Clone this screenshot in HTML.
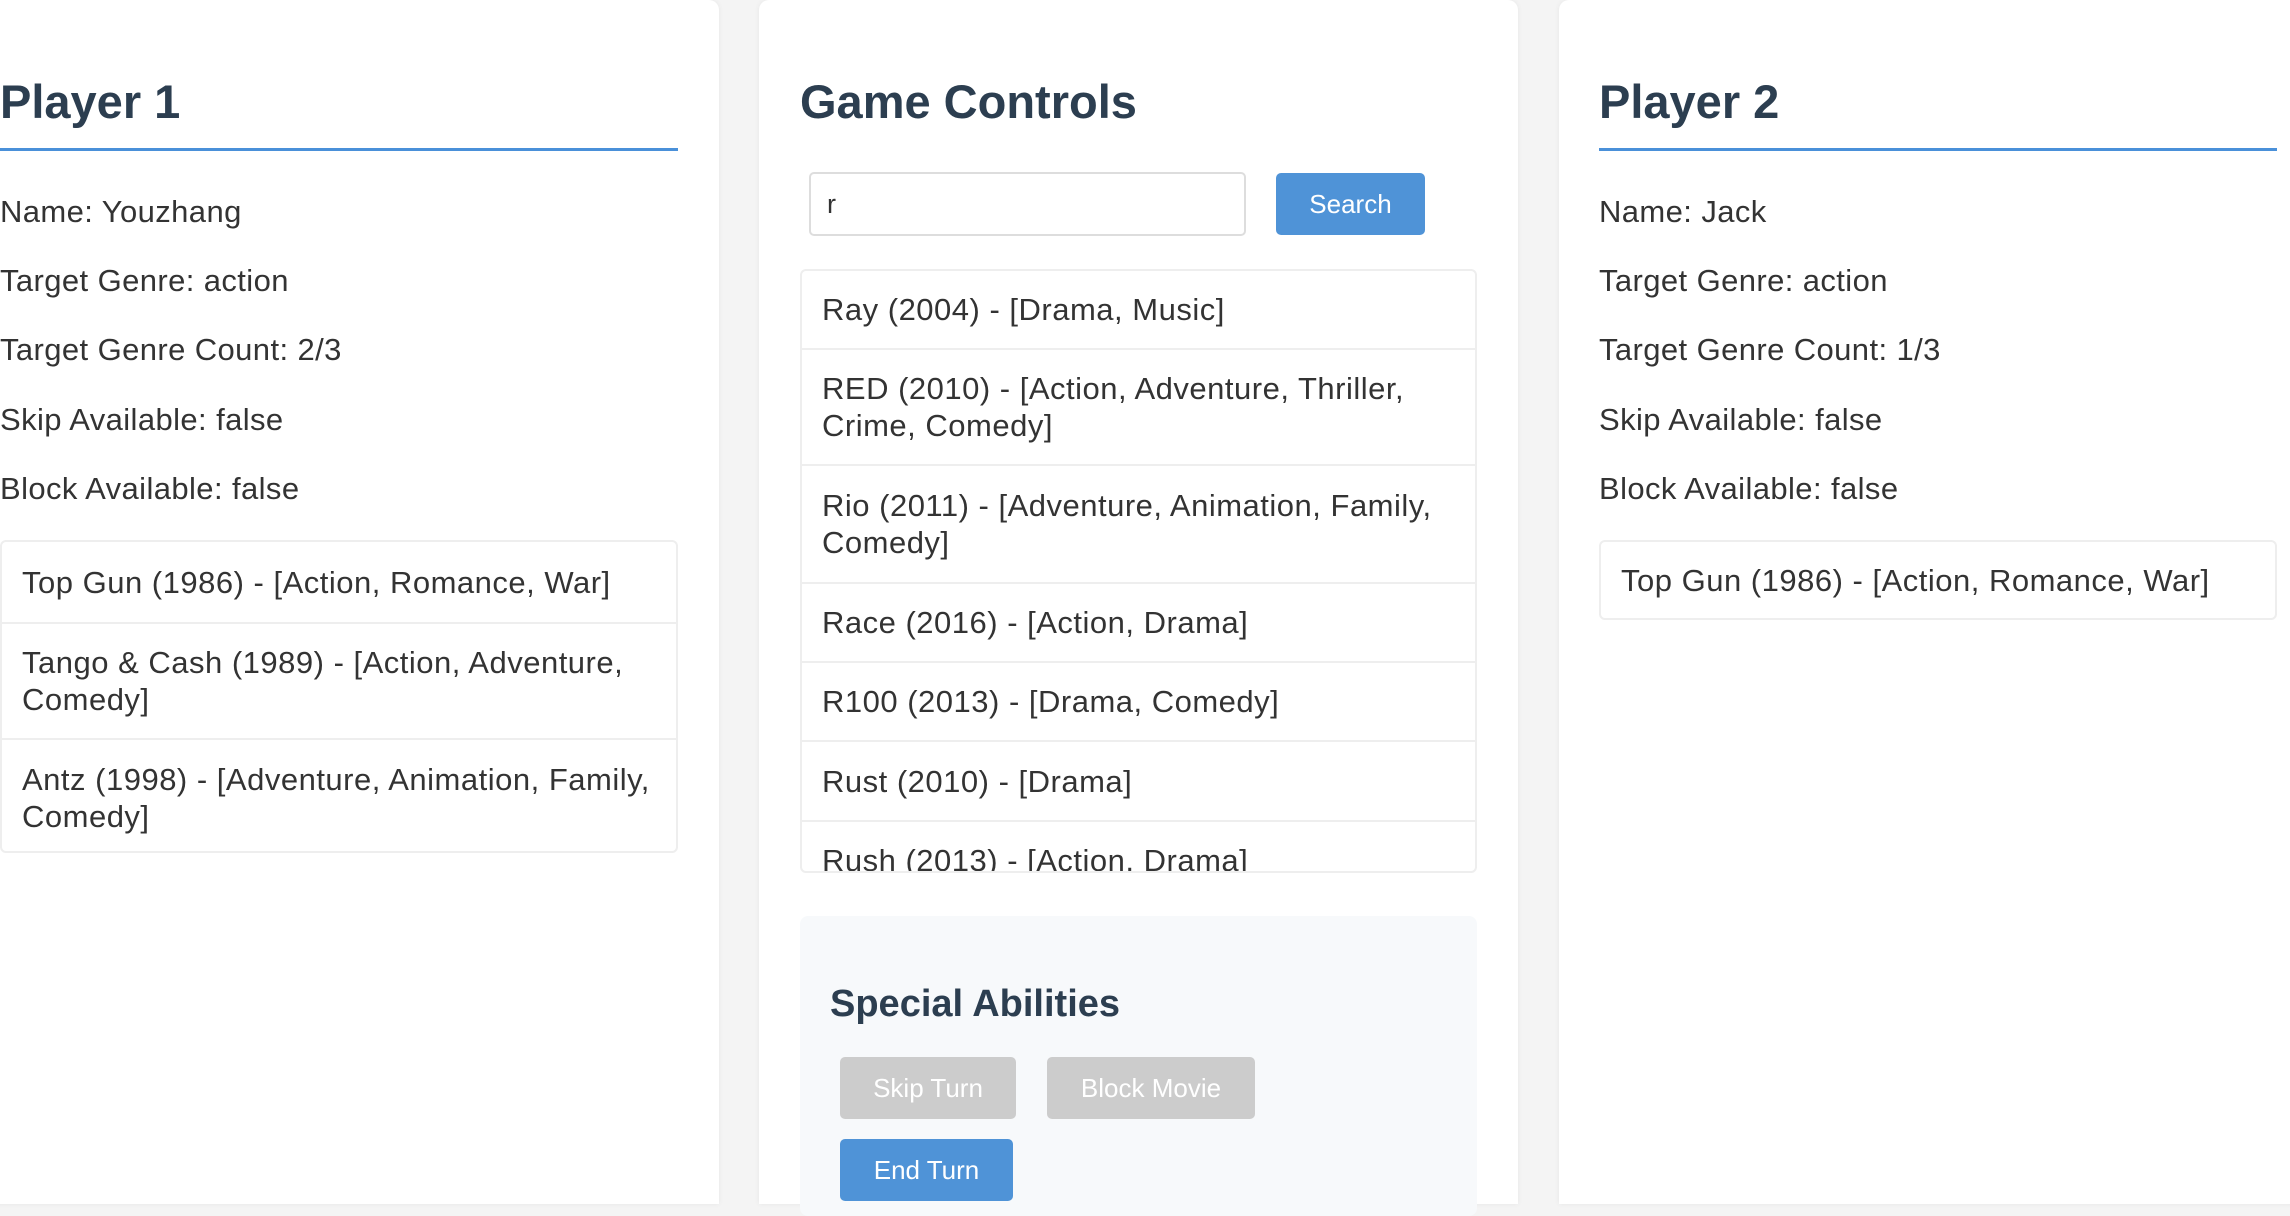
<!DOCTYPE html>
<html><head><meta charset="utf-8"><style>
*{box-sizing:border-box;margin:0;padding:0}
body{width:2290px;height:1204px;overflow:hidden;background:#f4f4f4;font-family:"Liberation Sans",Arial,sans-serif;color:#333;position:relative}
.panel{position:absolute;top:0;height:1204px;background:#fff;border-radius:10px 10px 0 0;box-shadow:0 0 6px rgba(0,0,0,.06)}
.a{position:absolute}
h2{position:absolute;font-size:47px;font-weight:bold;color:#2c3e50;line-height:1}
.rule{position:absolute;height:3px;background:#4a90d9}
.info{position:absolute;font-size:31px;letter-spacing:.4px;line-height:1;white-space:nowrap}
.box{position:absolute;border:2px solid #eee;border-radius:6px;overflow:hidden;background:#fff}
.it{position:absolute;left:0;right:0;border-top:2px solid #eee;font-size:31px;letter-spacing:.5px;line-height:37px;padding-left:20px;display:flex;align-items:center;white-space:nowrap}
.it:first-child{border-top:none}
.btn{position:absolute;border-radius:5px;color:#fff;font-size:26px;display:flex;align-items:center;justify-content:center}
</style></head><body>
<div class="panel" style="left:-20px;width:739px"></div>
<div class="panel" style="left:759px;width:759px"></div>
<div class="panel" style="left:1559px;width:760px"></div>

<h2 style="left:0;top:78px">Player 1</h2>
<div class="rule" style="left:0;width:678px;top:148px"></div>
<div class="info" style="left:0;top:196px">Name: Youzhang</div>
<div class="info" style="left:0;top:265px">Target Genre: action</div>
<div class="info" style="left:0;top:334px">Target Genre Count: 2/3</div>
<div class="info" style="left:0;top:404px">Skip Available: false</div>
<div class="info" style="left:0;top:473px">Block Available: false</div>
<div class="box" style="left:0;top:540px;width:678px;height:313px">
<div class="it" style="top:0;height:80px">Top Gun (1986) - [Action, Romance, War]</div>
<div class="it" style="top:80px;height:116px">Tango &amp; Cash (1989) - [Action, Adventure,<br>Comedy]</div>
<div class="it" style="top:196px;height:117px">Antz (1998) - [Adventure, Animation, Family,<br>Comedy]</div>
</div>

<h2 style="left:800px;top:78px">Game Controls</h2>
<div class="a" style="left:809px;top:172px;width:437px;height:64px;border:2px solid #ddd;border-radius:5px;font-size:27px;padding:15px 0 0 16px">r</div>
<div class="btn" style="left:1276px;top:173px;width:149px;height:62px;background:#4f93d7">Search</div>
<div class="box" style="left:800px;top:269px;width:677px;height:604px">
<div class="it" style="top:0;height:77px">Ray (2004) - [Drama, Music]</div>
<div class="it" style="top:77px;height:116px">RED (2010) - [Action, Adventure, Thriller,<br>Crime, Comedy]</div>
<div class="it" style="top:193px;height:118px">Rio (2011) - [Adventure, Animation, Family,<br>Comedy]</div>
<div class="it" style="top:311px;height:79px">Race (2016) - [Action, Drama]</div>
<div class="it" style="top:390px;height:79px">R100 (2013) - [Drama, Comedy]</div>
<div class="it" style="top:469px;height:80px">Rust (2010) - [Drama]</div>
<div class="it" style="top:549px;height:79px">Rush (2013) - [Action, Drama]</div>
</div>
<div class="a" style="left:800px;top:916px;width:677px;height:300px;background:#f7f9fb;border-radius:8px"></div>
<div class="a" style="left:830px;top:985px;font-size:38px;font-weight:bold;color:#2c3e50;line-height:1">Special Abilities</div>
<div class="btn" style="left:840px;top:1057px;width:176px;height:62px;background:#ccc">Skip Turn</div>
<div class="btn" style="left:1047px;top:1057px;width:208px;height:62px;background:#ccc">Block Movie</div>
<div class="btn" style="left:840px;top:1139px;width:173px;height:62px;background:#4f93d7">End Turn</div>

<h2 style="left:1599px;top:78px">Player 2</h2>
<div class="rule" style="left:1599px;width:678px;top:148px"></div>
<div class="info" style="left:1599px;top:196px">Name: Jack</div>
<div class="info" style="left:1599px;top:265px">Target Genre: action</div>
<div class="info" style="left:1599px;top:334px">Target Genre Count: 1/3</div>
<div class="info" style="left:1599px;top:404px">Skip Available: false</div>
<div class="info" style="left:1599px;top:473px">Block Available: false</div>
<div class="box" style="left:1599px;top:540px;width:678px;height:80px">
<div class="it" style="top:0;height:76px">Top Gun (1986) - [Action, Romance, War]</div>
</div>
</body></html>
